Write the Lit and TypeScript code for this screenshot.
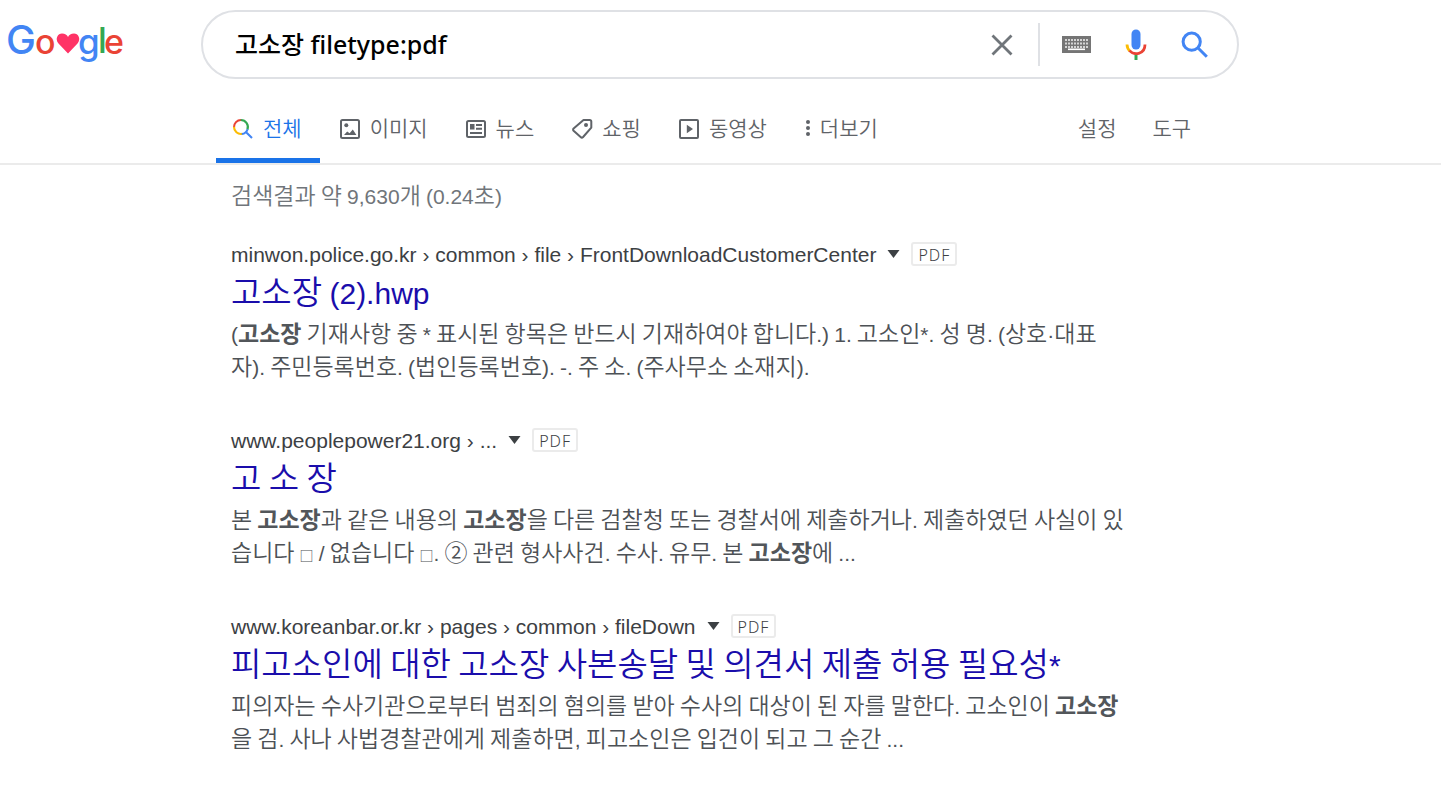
import { LitElement, html, svg, css, TemplateResult } from "lit";
import { customElement, property } from "lit/decorators.js";

/** Renders mixed Korean/Latin copy; **text** becomes bold and Latin runs get the Latin face. */
const mixed = (text: string): TemplateResult[] =>
  text.split("**").map((part, i) => {
    const runs = part
      .split(/([!-~·]+|□)/)
      .filter((run) => run !== "")
      .map((run) =>
        run === "□"
          ? html`<span class="box">□</span>`
          : /^[!-~·]/.test(run)
            ? html`<span class="latin">${run}</span>`
            : html`${run}`
      );
    return i % 2 ? html`<b>${runs}</b>` : html`${runs}`;
  });

const icons = {
  all: svg`<g fill="none" stroke-width="2.1">
      <path d="M2 9.2A7 7 0 0 1 9 2" stroke="#ea4335"/>
      <path d="M8.8 2A7 7 0 0 1 15.4 11.6" stroke="#34a853"/>
      <path d="M2 8.8A7 7 0 0 0 10.2 15.9" stroke="#fbbc04"/>
      <path d="M9.8 16A7 7 0 0 0 15.6 11.2M13.4 13.4L20 20" stroke="#4285f4"/></g>`,
  image: svg`<rect x="1" y="2" width="18" height="18" rx="1.5" fill="none" stroke="currentColor" stroke-width="2"/>
      <circle cx="6.3" cy="7.3" r="2"/><path d="M4 17l3.2-3.6 2.4 1.8 3.2-3.6 3.6 5.4z"/>`,
  news: svg`<rect x="1" y="3" width="18" height="16" rx="1.5" fill="none" stroke="currentColor" stroke-width="2"/>
      <path d="M4 6h4.500v5.500H4zM10 6h6v2h-6zM10 9.700h6v2h-6zM4 14h12v2h-12z"/>`,
  tag: svg`<path d="M11.500 2h6.200a1.6 1.6 0 0 1 1.6 1.6v6L11.100 19a1.8 1.8 0 0 1-2.5.1L1.6 12.800a1.6 1.6 0 0 1 0-2.3z" fill="none" stroke="currentColor" stroke-width="2" stroke-linejoin="round"/>
      <circle cx="14" cy="7" r="2"/>`,
  video: svg`<rect x="1" y="2" width="18" height="18" rx="1" fill="none" stroke="currentColor" stroke-width="2"/>
      <path d="M7.800 6.700l6.200 4.300L7.800 15.300z"/>`,
};

const tabs = [
  { label: "전체", icon: icons.all, active: true },
  { label: "이미지", icon: icons.image },
  { label: "뉴스", icon: icons.news },
  { label: "쇼핑", icon: icons.tag },
  { label: "동영상", icon: icons.video },
];

const results = [
  {
    url: "minwon.police.go.kr › common › file › FrontDownloadCustomerCenter",
    title: "고소장 (2).hwp",
    text: "(**고소장** 기재사항 중 * 표시된 항목은 반드시 기재하여야 합니다.) 1. 고소인*. 성 명. (상호·대표자). 주민등록번호. (법인등록번호). -. 주 소. (주사무소 소재지).",
  },
  {
    url: "www.peoplepower21.org › ...",
    title: "고 소 장",
    text: "본 **고소장**과 같은 내용의 **고소장**을 다른 검찰청 또는 경찰서에 제출하거나. 제출하였던 사실이 있습니다 □ / 없습니다 □. ② 관련 형사사건. 수사. 유무. 본 **고소장**에 ...",
  },
  {
    url: "www.koreanbar.or.kr › pages › common › fileDown",
    title: "피고소인에 대한 고소장 사본송달 및 의견서 제출 허용 필요성*",
    text: "피의자는 수사기관으로부터 범죄의 혐의를 받아 수사의 대상이 된 자를 말한다. 고소인이 **고소장**을 검. 사나 사법경찰관에게 제출하면, 피고소인은 입건이 되고 그 순간 ...",
  },
];

@customElement("search-result")
export class SearchResult extends LitElement {
  @property() url = "";
  @property() heading = "";
  @property() text = "";

  static styles = css`
    :host { display: block; }
    .source { display: flex; align-items: center; height: 26px; }
    .url {
      font: 21px/26px "Liberation Sans", Arial, sans-serif;
      color: #3c4043; text-decoration: none; white-space: nowrap;
    }
    .more {
      display: flex; padding: 0 0 2px; margin: 0 11px; border: 0;
      background: none; color: #3c4043; cursor: pointer;
    }
    .badge {
      box-sizing: border-box; height: 24px; padding: 0 5px; margin-bottom: 2px;
      border: 2px solid #ebebeb; border-radius: 3px;
      font: 350 16px/22px "Noto Sans", sans-serif; letter-spacing: 1px; color: #3c4043;
    }
    h3 {
      margin: 0 0 4px; font-weight: 350; font-size: 33px; line-height: 44px;
      white-space: nowrap;
    }
    h3 a { color: #1a0dab; text-decoration: none; }
    h3 a:hover { text-decoration: underline; }
    p { margin: 0; font-size: 23px; font-weight: 350; line-height: 33px; color: #4d5156; }
    b { font-weight: 700; color: #52565a; }
    .latin { font-family: "Liberation Sans", Arial, sans-serif; font-weight: 400; line-height: 1; }
    h3 .latin { font-size: 30px; }
    p .latin { font-size: 21px; }
    .box { font-size: 14px; line-height: 1; font-weight: 400; }
  `;

  render() {
    return html`
      <div class="source">
        <a class="url" href="#">${this.url}</a>
        <button class="more" aria-label="더보기">
          <svg width="13" height="8" viewBox="0 0 13 8"><path d="M.5 0h12l-6 8z" fill="currentColor"/></svg>
        </button>
        <span class="badge">PDF</span>
      </div>
      <h3><a href="#">${mixed(this.heading)}</a></h3>
      <p>${mixed(this.text)}</p>
    `;
  }
}

@customElement("app-root")
export class AppRoot extends LitElement {
  static styles = css`
    :host {
      display: block; min-height: 100vh; background: #fff;
      font-family: "Noto Sans CJK KR", sans-serif; font-weight: 350;
    }
    .top { display: grid; grid-template-columns: 197px minmax(0, 1038px); padding: 10px 8px 0 4px; }
    .logo { display: block; height: 52px; }
    .search {
      display: flex; align-items: center; box-sizing: border-box; height: 69px;
      border: 2px solid #dfe1e5; border-radius: 35px; padding: 0 13px 0 32px;
    }
    .search input {
      box-sizing: border-box; flex: 1; min-width: 0; height: 44px; padding: 0 0 4px; border: 0; outline: 0; background: none;
      font: 500 25px/36px "Noto Sans", "Noto Sans CJK KR", sans-serif; color: #000;
    }
    .search button {
      display: flex; justify-content: center; padding: 0; border: 0;
      background: none; cursor: pointer; width: 59px;
    }
    .search .clear { width: 72px; }
    .rule { width: 2px; height: 43px; background: #dfe1e5; margin-right: 7px; }
    .nav {
      display: flex; align-items: stretch; height: 56px; margin-top: 28px;
      padding-left: 216px; border-bottom: 2px solid #ebebeb;
    }
    .nav a, .nav button {
      display: flex; align-items: center; box-sizing: border-box; gap: 9px;
      padding: 0 17px 11px 16px; border: 0; border-bottom: 5px solid transparent;
      background: none; color: #5f6368; text-decoration: none; white-space: nowrap;
      font: inherit; font-size: 21px; line-height: 30px; cursor: pointer;
    }
    .nav a { margin-right: 5px; }
    .nav svg { fill: currentColor; margin-top: 2px; }
    .nav a.active { gap: 10px; padding-right: 18px; margin-right: 4px; color: #1a73e8; border-bottom-color: #1a73e8; }
    .nav .tools { display: flex; margin-left: 165px; }
    .nav .tools button { padding: 0 18px 11px; }
    main { max-width: 896px; padding: 0 16px 0 231px; }
    .stats { height: 58px; font-size: 23px; line-height: 58px; color: #70757a; margin: 0 0 19px; }
    .stats .latin { font: 400 21px/1 "Liberation Sans", Arial, sans-serif; }
    .list { display: grid; gap: 46px; }
  `;

  render() {
    return html`
      <header>
        <div class="top">
          <a class="logo" href="#" aria-label="Google">
            <svg width="124" height="60" viewBox="-4 0 124 60" font-family="Inter, sans-serif" font-weight="500">
              <text x="-2" y="44" font-size="40" fill="#4285f4">G</text>
              <text x="27" y="44" font-size="34" fill="#ea4335">o</text>
              <path d="M60 43.500L50.500 33.500C46.500 28.500 50 23.500 54 23.500c3 0 5 1.500 6 3.500 1-2 3-3.500 6-3.500 4 0 7.500 5 3.500 10z" fill="#ff3366"/>
              <text x="70" y="44" font-size="35" fill="#4285f4">g</text>
              <text x="90" y="43" font-size="35" fill="#34a853">l</text>
              <text x="96" y="44" font-size="34" fill="#ea4335">e</text>
            </svg>
          </a>
          <form class="search" role="search" @submit=${(e: Event) => e.preventDefault()}>
            <input type="text" aria-label="검색" .value=${"고소장 filetype:pdf"} />
            <button class="clear" type="button" aria-label="지우기">
              <svg width="22" height="22" viewBox="0 0 22 22"><path d="M1.500 1.500l19 19m0-19l-19 19" stroke="#70757a" stroke-width="2.800"/></svg>
            </button>
            <span class="rule"></span>
            <button type="button" aria-label="입력 도구">
              <svg width="29" height="17" viewBox="0 0 29 17">
                <path d="M0 0h29v17H0z" fill="#757575"/>
                <path d="M3 4h23M3 7.500h23M3 11h23" stroke="#d4d4d4" stroke-width="2" stroke-dasharray="2 1"/>
                <path d="M6 13.300h17" stroke="#fff" stroke-width="1.600"/>
              </svg>
            </button>
            <button type="button" aria-label="음성 검색">
              <svg width="22" height="31" viewBox="0 0 22 31">
                <rect x="6.500" y="0.500" width="9" height="20" rx="4.500" fill="#4285f4"/>
                <path d="M9.500 25h3v6h-3z" fill="#34a853"/>
                <path d="M2 15.500a9.500 9.500 0 0 0 3 6.700" fill="none" stroke="#fbbc04" stroke-width="2.800"/>
                <path d="M4.500 21.500C8.500 26.500 20 26 20 15.500" fill="none" stroke="#ea4335" stroke-width="2.800"/>
              </svg>
            </button>
            <button type="submit" aria-label="검색">
              <svg width="28" height="28" viewBox="0 0 28 28"><g fill="none" stroke="#4285f4" stroke-width="3"><circle cx="10.700" cy="10.700" r="8.600"/><path d="M16.800 16.800l9 9"/></g></svg>
            </button>
          </form>
        </div>
        <nav class="nav">
          ${tabs.map(
            (tab) => html`<a href="#" class=${tab.active ? "active" : ""}>
              <svg width="21" height="21" viewBox="0 0 21 21">${tab.icon}</svg>${tab.label}</a>`
          )}
          <button class="more">
            <svg width="6" height="18" viewBox="0 0 6 18"><circle cx="3" cy="3" r="2"/><circle cx="3" cy="9" r="2"/><circle cx="3" cy="15" r="2"/></svg>더보기
          </button>
          <div class="tools"><button>설정</button><button>도구</button></div>
        </nav>
      </header>
      <main>
        <p class="stats">${mixed("검색결과 약 9,630개 (0.24초)")}</p>
        <div class="list">
          ${results.map(
            (r) => html`<search-result .url=${r.url} .heading=${r.title} .text=${r.text}></search-result>`
          )}
        </div>
      </main>
    `;
  }
}
